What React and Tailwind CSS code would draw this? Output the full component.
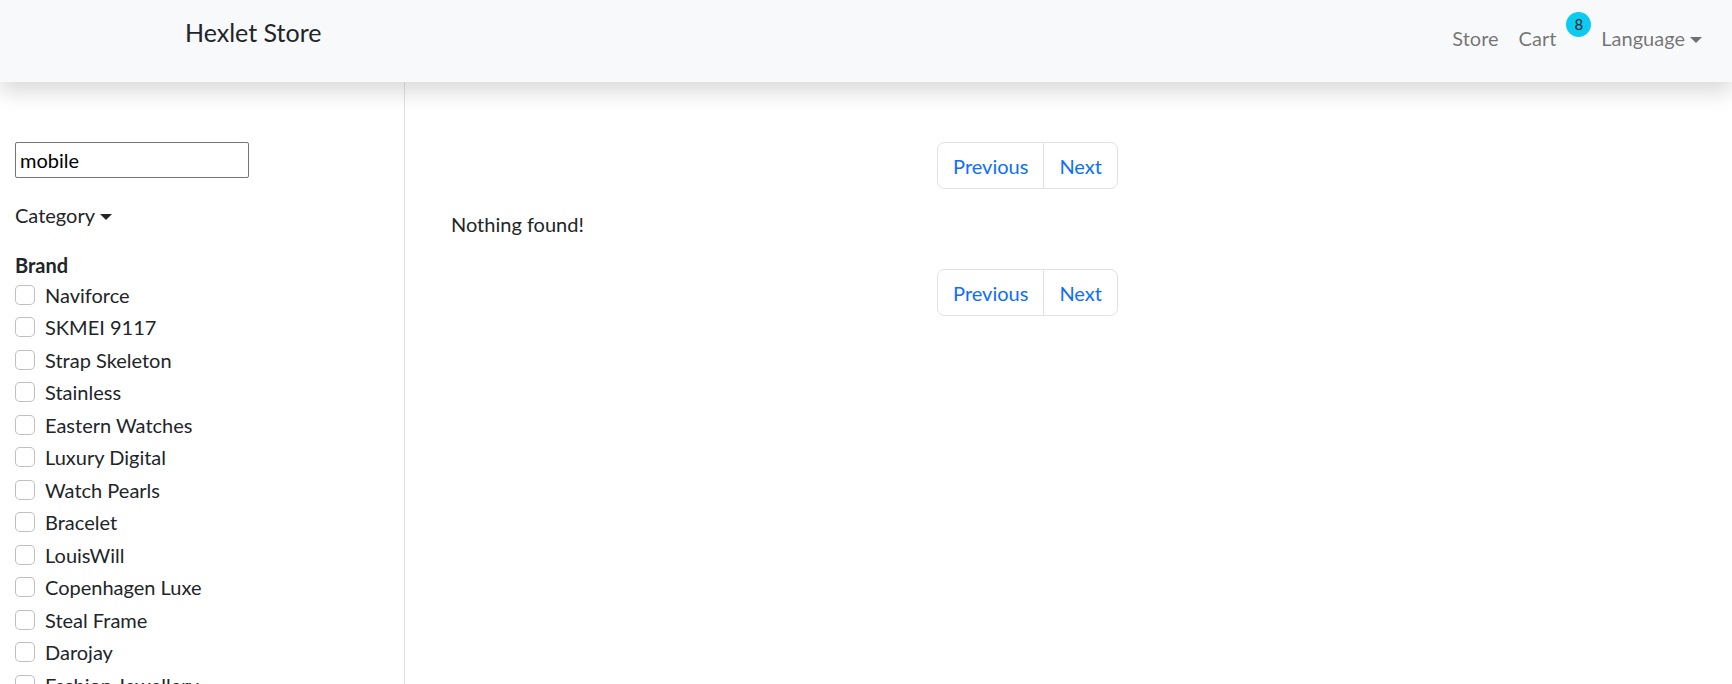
import React from 'react';

const brands = [
  'Naviforce',
  'SKMEI 9117',
  'Strap Skeleton',
  'Stainless',
  'Eastern Watches',
  'Luxury Digital',
  'Watch Pearls',
  'Bracelet',
  'LouisWill',
  'Copenhagen Luxe',
  'Steal Frame',
  'Darojay',
  'Fashion Jewellery',
  'Cuff Butterfly',
  'Fashion Interiors',
];

const Caret = ({ className }) => (
  <span
    className={`inline-block ml-[5px] align-[3px] border-t-[6px] border-x-[6px] border-x-transparent ${className}`}
  />
);

const Pagination = () => (
  <div className="flex justify-center">
    <ul className="flex border border-[#dee2e6] rounded-[7.5px] text-[#0d6efd]">
      <li>
        <a href="#" className="block px-[15px] py-[7.5px] border-r border-[#dee2e6]">Previous</a>
      </li>
      <li>
        <a href="#" className="block px-[15px] py-[7.5px]">Next</a>
      </li>
    </ul>
  </div>
);

const Header = () => (
  <header className="relative z-10 h-[82px] bg-[#f8f9fa] shadow-[0_10px_20px_rgba(0,0,0,0.15)] flex items-start justify-between">
    <a href="#" className="ml-[185px] mt-[14px] text-[25px] leading-[37.5px] text-[#212529]">
      Hexlet Store
    </a>
    <nav className="flex items-start mt-[23px] mr-[20px] text-[#0000008c]">
      <a href="#" className="px-[10px]">Store</a>
      <a href="#" className="pl-[10px] pr-[10px]">Cart</a>
      <span className="relative -top-[11px] flex items-center justify-center w-[25px] h-[25px] rounded-full bg-[#0dcaf0] text-[#212529] text-[15px] leading-none">
        8
      </span>
      <a href="#" className="px-[10px]">
        Language
        <Caret className="border-t-[#0000008c]" />
      </a>
    </nav>
  </header>
);

const Sidebar = () => (
  <aside className="w-[405px] shrink-0 border-r border-[#dee2e6] px-[15px] pt-[60px] min-h-[602px]">
    <input
      type="text"
      defaultValue="mobile"
      className="block w-[234px] h-[36px] border border-[#767676] rounded-[2px] px-[4px] text-[20px] text-black outline-none"
    />
    <div className="mt-[21.5px]">
      Category
      <Caret className="border-t-[#212529]" />
    </div>
    <div className="mt-[20px] font-bold">Brand</div>
    <div>
      {brands.map((b) => (
        <label key={b} className="flex items-start min-h-[30px] mb-[2.5px]">
          <input
            type="checkbox"
            className="appearance-none shrink-0 w-[20px] h-[20px] mt-[5px] border border-[#00000040] rounded-[5px] bg-white"
          />
          <span className="ml-[10px]">{b}</span>
        </label>
      ))}
    </div>
  </aside>
);

export default function App() {
  return (
    <div className="min-h-screen bg-white text-[#212529] text-[20px] leading-[30px] font-['Segoe_UI','Lato',sans-serif]">
      <Header />
      <div className="flex">
        <Sidebar />
        <main className="flex-1 pl-[46px] pr-[128px] pt-[60px]">
          <Pagination />
          <p className="mt-[20px]">Nothing found!</p>
          <div className="mt-[30px]">
            <Pagination />
          </div>
        </main>
      </div>
    </div>
  );
}
